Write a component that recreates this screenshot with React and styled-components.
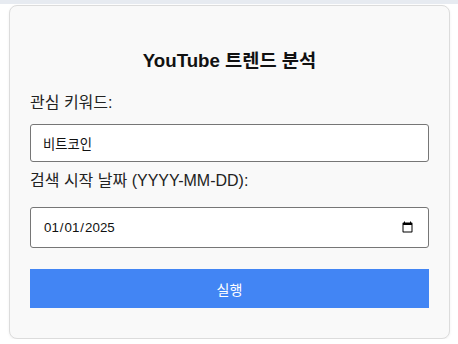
import React from "react";
import styled, { createGlobalStyle } from "styled-components";

const Global = createGlobalStyle`
  html, body { margin: 0; padding: 0; background: #ffffff; }
  body { font-family: "Liberation Sans", Arial, "Noto Sans CJK KR", sans-serif; color: #222; }
  * { box-sizing: border-box; }
`;

const TopStrip = styled.div`
  height: 4px;
  background: #e7ebf1;
`;

const Page = styled.div`
  padding: 1px 8px 0 9px;
`;

const Card = styled.div`
  background: #f9f9f9;
  border: 1px solid #dcdcdc;
  border-radius: 8px;
  box-shadow: 0 1px 3px rgba(0, 0, 0, 0.06);
  padding: 44px 20px 30px 20px;
  display: flex;
  flex-direction: column;
`;

const Title = styled.h2`
  margin: 0 0 21px 0;
  text-align: center;
  font-size: 18.7px;
  line-height: 22px;
  font-weight: 700;
  color: #111;
`;

const Label = styled.label`
  display: block;
  font-size: 16px;
  line-height: 20px;
  color: #222;
  margin: ${(p) => p.$mt || 0}px 0 ${(p) => p.$mb || 0}px 0;
`;

const TextInput = styled.input`
  display: block;
  width: 100%;
  height: ${(p) => p.$h || 38}px;
  border: 1px solid #767676;
  border-radius: 3px;
  background: #fff;
  padding: 0 12px;
  font-family: "Liberation Sans", Arial, "Noto Sans CJK KR", sans-serif;
  font-size: 13.33px;
  color: #111;
  outline: none;
`;

const RunButton = styled.button`
  display: block;
  width: 100%;
  height: 39px;
  margin-top: 21px;
  border: none;
  border-radius: 0;
  background: #4285f4;
  color: #fff;
  font-family: "Liberation Sans", Arial, "Noto Sans CJK KR", sans-serif;
  font-size: 14px;
  cursor: pointer;
`;

export default function App() {
  return (
    <>
      <Global />
      <TopStrip />
      <Page>
        <Card>
          <Title>YouTube 트렌드 분석</Title>
          <Label $mb={11}>관심 키워드:</Label>
          <TextInput type="text" defaultValue="비트코인" />
          <Label $mt={9} $mb={16}>검색 시작 날짜 (YYYY-MM-DD):</Label>
          <TextInput type="date" $h={41} defaultValue="2025-01-01" />
          <RunButton>실행</RunButton>
        </Card>
      </Page>
    </>
  );
}
